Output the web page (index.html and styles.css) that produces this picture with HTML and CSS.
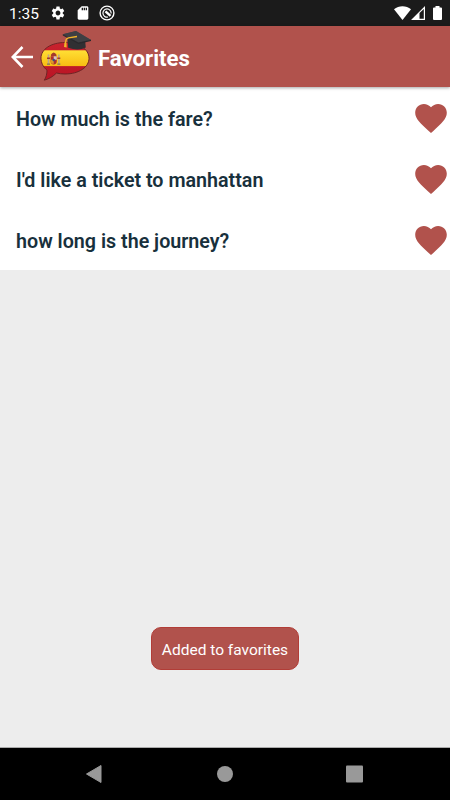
FILE: index.html
```html
<!DOCTYPE html>
<html lang="en">
<head>
  <meta charset="UTF-8" />
  <meta name="viewport" content="width=device-width, initial-scale=1.0"/>
  <title>Favorites</title>
  <link rel="stylesheet" href="styles.css">
</head>
<body>
  <svg class="defs" width="0" height="0">
    <symbol id="heart" viewBox="2 3 20 18.35">
      <path d="M12 21.35l-1.45-1.32C5.4 15.36 2 12.28 2 8.5 2 5.42 4.42 3 7.5 3c1.74 0 3.41.81 4.5 2.09C13.09 3.81 14.76 3 16.5 3 19.58 3 22 5.42 22 8.5c0 3.78-3.4 6.86-8.55 11.54L12 21.35z"/>
    </symbol>
  </svg>

  <div class="status-bar">
    <span class="time">1:35</span>
    <div class="status-left">
      <svg width="16" height="16" viewBox="0 0 24 24" fill="#fff"><path d="M19.14 12.94c.04-.3.06-.61.06-.94 0-.32-.02-.64-.07-.94l2.03-1.58c.18-.14.23-.41.12-.61l-1.92-3.32c-.12-.22-.37-.29-.59-.22l-2.39.96c-.5-.38-1.03-.7-1.62-.94l-.36-2.54c-.04-.24-.24-.41-.48-.41h-3.84c-.24 0-.43.17-.47.41l-.36 2.54c-.59.24-1.13.57-1.62.94l-2.39-.96c-.22-.08-.47 0-.59.22L2.74 8.87c-.12.21-.08.47.12.61l2.03 1.58c-.05.3-.09.63-.09.94s.02.64.07.94l-2.03 1.58c-.18.14-.23.41-.12.61l1.92 3.32c.12.22.37.29.59.22l2.39-.96c.5.38 1.03.7 1.62.94l.36 2.54c.05.24.24.41.48.41h3.84c.24 0 .44-.17.47-.41l.36-2.54c.59-.24 1.13-.56 1.62-.94l2.39.96c.22.08.47 0 .59-.22l1.92-3.32c.12-.22.07-.47-.12-.61l-2.01-1.58zM12 15.6c-1.98 0-3.6-1.62-3.6-3.6s1.62-3.6 3.6-3.6 3.6 1.62 3.6 3.6-1.62 3.6-3.6 3.6z"/></svg>
      <svg width="16" height="16" viewBox="0 0 24 24" fill="#fff"><path d="M18 2h-8L4 8v12c0 1.100.9 2 2 2h12c1.100 0 2-.9 2-2V4c0-1.100-.9-2-2-2zm-6 6h-2V4h2v4zm3 0h-2V4h2v4zm3 0h-2V4h2v4z"/></svg>
      <svg width="16" height="16" viewBox="0 0 16 16" fill="none" stroke="#fff"><circle cx="8" cy="8" r="6.900" stroke-width="1.400"/><path d="M9 12A4.100 4.100 0 1 1 12.100 8.500" stroke-width="1.200"/><path d="M6.500 6.300L11.500 10.800" stroke-width="2.400"/></svg>
    </div>
    <div class="status-right">
      <svg width="17" height="14" viewBox="0 0 17 14" fill="#fff"><path d="M0 3.300C4.700-.9 12.300-.9 17 3.300L8.500 14z"/></svg>
      <svg width="14" height="14" viewBox="0 0 14 14"><path fill="#fff" fill-rule="evenodd" d="M14 0v14H0zM8.500 7V12.800H12.800V3z"/></svg>
      <svg class="battery" width="9" height="14" viewBox="0 0 9 14" fill="#fff"><path d="M2.500 0h4v1.400h1.500q1 0 1 1V13q0 1-1 1H1q-1 0-1-1V2.400q0-1 1-1h1.500z"/></svg>
    </div>
  </div>

  <header>
    <svg class="back" width="22" height="22" viewBox="0 0 22 22" fill="none" stroke="#fff" stroke-width="2.600"><path d="M22 11H2M11.500 1L1.800 11l9.700 10"/></svg>
    <svg class="logo" width="52" height="52" viewBox="40 30 52 52">
      <defs>
        <clipPath id="bubble"><path d="M65 42.500c14 0 24 6.700 24 15.700S79 74 65 74c-3 0-6-.3-8.500-1C53 76.500 49 79 44.300 80.200c1.800-3 2.700-6.200 2.700-10C43 67 41 62.500 41 58.200 41 49.200 51 42.500 65 42.500z"/></clipPath>
        <linearGradient id="gold" x1="0" x2="0" y1="0" y2="1"><stop offset="0" stop-color="#ffdf35"/><stop offset="1" stop-color="#f8bd12"/></linearGradient>
        <linearGradient id="red" x1="0" x2="0" y1="0" y2="1"><stop offset="0" stop-color="#c9222e"/><stop offset="1" stop-color="#b91424"/></linearGradient>
      </defs>
      <g clip-path="url(#bubble)">
        <rect x="40" y="42" width="52" height="40" fill="url(#red)"/>
        <rect x="40" y="50.300" width="52" height="15.800" fill="url(#gold)"/>
      </g>
      <path fill="none" stroke="#672322" stroke-width=".9" d="M65 42.500c14 0 24 6.700 24 15.700S79 74 65 74c-3 0-6-.3-8.500-1C53 76.500 49 79 44.300 80.200c1.800-3 2.700-6.200 2.700-10C43 67 41 62.500 41 58.200 41 49.200 51 42.500 65 42.500z"/>
      <!-- coat of arms -->
      <path fill="#b9a58d" d="M47.700 54.500h1.600v9h-1.600zM58 54.500h1.600v9H58z"/>
      <path fill="#a33b2c" d="M47 57.500h3v1.500h-3zM57.300 57.500h3v1.500h-3zM50.700 55q3-5 6 0l-.6 1.200h-4.800z"/>
      <path fill="#ad2f31" d="M50.600 56.300h6.200v5q0 3-3.100 3.300-3.100-.3-3.100-3.300z"/>
      <path fill="#d8c5bd" d="M53.700 56.300h3.100v3.400h-3.100z"/>
      <path fill="#dd9c27" d="M50.600 59.800h3.100v4.200q-3.100-.4-3.100-2.700z"/>
      <circle cx="53.700" cy="60" r="1.200" fill="#354e89"/>
      <path fill="#777466" d="M47 63.500h3v1.300h-3zM57.300 63.500h3v1.300h-3z"/>
      <!-- graduation cap -->
      <path fill="#303033" d="M67.500 38.500l17.500 1 .8 8q-7.500 4-17.600.3z"/>
      <path fill="#48484c" d="M62.800 34.200L76 31l15 9-11.600 2.500z"/>
      <path fill="#3f3f43" d="M62.800 34.200L76 31l15 9-12.500 3z"/>
      <path fill="#29292c" d="M62.800 34.200l15.700 8.300L91 39.700v1.300l-12.500 2.900-15.700-8.400z"/>
      <path fill="none" stroke="#f3b429" stroke-width="1.300" d="M77 36.500l-8.500 1.300q-2.500.5-2.600 3.200l-.6 2.500"/>
      <path fill="#f3b429" d="M64.500 42.500l2 .2.200 4.800-2.700-.4z"/>
    </svg>
    <h1>Favorites</h1>
  </header>

  <main>
    <ul class="favorites">
      <li><span>How much is the fare?</span><svg class="heart"><use href="#heart"/></svg></li>
      <li><span>I'd like a ticket to manhattan</span><svg class="heart"><use href="#heart"/></svg></li>
      <li><span>how long is the journey?</span><svg class="heart"><use href="#heart"/></svg></li>
    </ul>
    <div class="toast">Added to favorites</div>
  </main>

  <nav class="nav-bar">
    <svg width="18" height="20" viewBox="0 0 18 20"><path d="M15 1.500v17L.5 10z" stroke-width="1" stroke="#999" stroke-linejoin="round"/></svg>
    <svg width="18" height="18" viewBox="0 0 18 18"><circle cx="9" cy="9" r="8"/></svg>
    <svg width="18" height="18" viewBox="0 0 18 18"><rect x="0" y=".5" width="17" height="17" rx="1"/></svg>
  </nav>
</body>
</html>
```

FILE: styles.css
```css
* {
  box-sizing: border-box;
}

body {
  margin: 0;
  height: 100vh;
  display: flex;
  flex-direction: column;
  overflow: hidden;
  font-family: Roboto, sans-serif;
  background: #ededed;
}

svg {
  display: block;
  flex: none;
}

.defs {
  position: absolute;
}

.status-bar {
  display: flex;
  align-items: center;
  height: 26px;
  padding: 0 8px 0 9px;
  background: #1b1b1b;
  color: #fff;
}

.time {
  width: 41px;
  font-size: 15.5px;
  line-height: 26px;
  padding-top: 2px;
}

.status-left {
  display: flex;
  gap: 8.5px;
}

.status-right {
  display: flex;
  align-items: center;
  margin-left: auto;
}

.battery {
  margin-left: 8px;
}

header {
  display: flex;
  align-items: center;
  height: 61px;
  padding: 0 11px;
  background: #b1524c;
  color: #fff;
  box-shadow: 0 1px 3px rgba(0,0,0,0.35);
  z-index: 1;
}

.logo {
  margin: 0 6px 2px 7px;
}

header h1 {
  margin: 2px 0 0;
  font-size: 22.2px;
  font-weight: 700;
}

main {
  flex: 1;
  display: flex;
  flex-direction: column;
}

.favorites {
  margin: 0;
  padding: 0;
  list-style: none;
  background: #fff;
}

.favorites li {
  display: flex;
  align-items: center;
  justify-content: space-between;
  height: 61px;
  padding: 0 3px 0 16px;
  color: #18303c;
  font-size: 19.7px;
  font-weight: 600;
}

.favorites span {
  padding-top: 3px;
}

.heart {
  width: 32px;
  height: 29px;
  margin-top: 1px;
  fill: #b1524c;
}

.toast {
  display: flex;
  align-items: center;
  justify-content: center;
  align-self: center;
  width: 148px;
  height: 43px;
  margin-top: auto;
  margin-bottom: 77px;
  padding-top: 2px;
  border: 1px solid #b23d37;
  border-radius: 10px;
  background: #b1524c;
  color: #fff;
  font-size: 15.5px;
}

.nav-bar {
  display: flex;
  align-items: center;
  justify-content: space-between;
  height: 53px;
  padding: 0 86px;
  border-top: 1px solid #aaa;
  background: #000;
  fill: #999;
}
```
